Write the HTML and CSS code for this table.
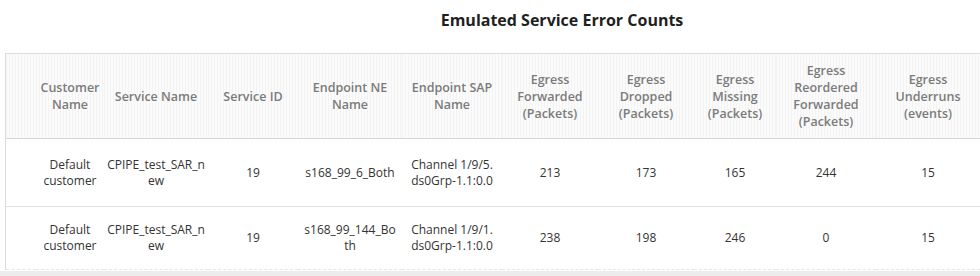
FILE: index.html
```html
<!DOCTYPE html>
<html lang="en">
<head>
    <meta charset="UTF-8">
    <meta name="viewport" content="width=device-width, initial-scale=1.0">
    <title>Emulated Service Error Counts</title>
    <link rel="stylesheet" href="styles.css">
</head>
<body>
    <div class="report">
        <h2 class="report-title">Emulated Service Error Counts</h2>
        <div class="table-wrap">
            <table class="counts-table">
                <colgroup>
                    <col class="c-pad">
                    <col class="c-customer">
                    <col class="c-service">
                    <col class="c-id">
                    <col class="c-ne">
                    <col class="c-sap">
                    <col class="c-fwd">
                    <col class="c-drop">
                    <col class="c-miss">
                    <col class="c-reord">
                    <col class="c-under">
                    <col class="c-extra">
                </colgroup>
                <thead>
                    <tr>
                        <th></th>
                        <th>Customer Name</th>
                        <th>Service Name</th>
                        <th>Service ID</th>
                        <th>Endpoint NE Name</th>
                        <th>Endpoint SAP Name</th>
                        <th>Egress Forwarded (Packets)</th>
                        <th>Egress Dropped (Packets)</th>
                        <th>Egress Missing (Packets)</th>
                        <th>Egress Reordered Forwarded (Packets)</th>
                        <th>Egress Underruns (events)</th>
                        <th></th>
                    </tr>
                </thead>
                <tbody>
                    <tr>
                        <td></td>
                        <td>Default customer</td>
                        <td class="wrap">CPIPE_test_SAR_new</td>
                        <td>19</td>
                        <td class="wrap ne">s168_99_6_Both</td>
                        <td>Channel 1/9/5.<wbr>ds0Grp-1.1:0.0</td>
                        <td>213</td>
                        <td>173</td>
                        <td>165</td>
                        <td>244</td>
                        <td>15</td>
                        <td></td>
                    </tr>
                    <tr>
                        <td></td>
                        <td>Default customer</td>
                        <td class="wrap">CPIPE_test_SAR_new</td>
                        <td>19</td>
                        <td class="wrap ne">s168_99_144_Both</td>
                        <td>Channel 1/9/1.<wbr>ds0Grp-1.1:0.0</td>
                        <td>238</td>
                        <td>198</td>
                        <td>246</td>
                        <td>0</td>
                        <td>15</td>
                        <td></td>
                    </tr>
                </tbody>
            </table>
        </div>
        <div class="scroll-track"></div>
    </div>
</body>
</html>
```

FILE: styles.css
```css
body {
    margin: 0;
    padding: 0;
    background: white;
    font-family: "Open Sans", "Noto Sans", sans-serif;
    overflow: hidden;
}
.report {
    width: 1124px;
}
.report-title {
    margin: 0;
    height: 53px;
    line-height: 40px;
    text-align: center;
    font-size: 16px;
    font-weight: 700;
    color: #1f1f1f;
}
.table-wrap {
    margin-left: 5px;
    border-top: 1px solid #dcdcdc;
    border-left: 1px solid #dcdcdc;
}
.counts-table {
    border-collapse: collapse;
    table-layout: fixed;
    width: 1118px;
}
.c-pad { width: 30px; }
.c-customer { width: 68px; }
.c-service { width: 104px; }
.c-id { width: 90px; }
.c-ne { width: 104px; }
.c-sap { width: 100px; }
.c-fwd { width: 96px; }
.c-drop { width: 96px; }
.c-miss { width: 82px; }
.c-reord { width: 100px; }
.c-under { width: 104px; }
.c-extra { width: 144px; }
.counts-table th {
    height: 84px;
    padding: 0 3px;
    background: repeating-linear-gradient(90deg, #f3f3f3 0 1px, #fbfbfb 1px 3px);
    border-bottom: 1px solid #d6d6d6;
    font-size: 12.5px;
    font-weight: 600;
    line-height: 17px;
    color: #7b7b7b;
    text-align: center;
    vertical-align: middle;
}
.counts-table td {
    height: 67px;
    padding: 0 3px;
    border-bottom: 1px solid #e0e0e0;
    font-size: 12px;
    line-height: 16px;
    color: #333;
    text-align: center;
    vertical-align: middle;
}
.counts-table tbody tr:last-child td {
    height: 62px;
    border-bottom: 1px dashed #e6e6e6;
}
.counts-table td.wrap {
    word-break: break-all;
}
.counts-table td.ne {
    padding: 0 5px;
}
.scroll-track {
    height: 8px;
    margin-top: 1px;
    background: #ececec;
}
```
